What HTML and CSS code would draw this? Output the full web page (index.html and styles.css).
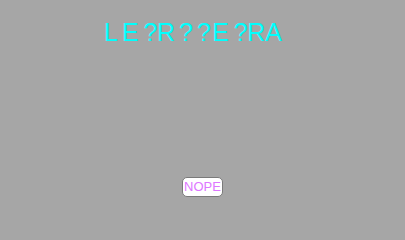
FILE: index.html
```html
<!DOCTYPE html>
<html>
<head>
<meta charset="utf-8">
<link rel="stylesheet" href="styles.css">
</head>
<body>
<div class="screen">
  <h1 class="title"><span class="g4">L</span><span class="g5">E</span><span class="gn">?</span><span class="g4">R?</span><span class="g1">?</span><span class="g5">E</span><span class="gn">?</span>RA</h1>
  <div class="spacer"></div>
  <button class="nope">NOPE</button>
</div>
</body>
</html>
```
FILE: styles.css
```css
html, body {
  margin: 0;
  padding: 0;
  background: #a6a6a6;
  width: 405px;
  height: 228px;
  overflow: hidden;
}
.screen {
  display: flex;
  flex-direction: column;
  align-items: center;
  height: 228px;
  font-family: "Liberation Sans", Arial, sans-serif;
}
.title {
  align-self: flex-start;
  margin: 18px 0 0 104px;
  font-family: "Liberation Sans", Arial, sans-serif;
  font-size: 25px;
  font-weight: normal;
  line-height: 29px;
  color: #00ffff;
  white-space: nowrap;
}
.g4 { letter-spacing: 4px; }
.g5 { letter-spacing: 4.9px; }
.gn { letter-spacing: -0.45px; }
.g1 { letter-spacing: 1.4px; }
.spacer {
  flex: 1;
}
.nope {
  margin: 0 0 31px 0;
  width: 41px;
  height: 20px;
  padding: 0;
  background: #ffffff;
  border: 1px solid #7a7a7a;
  border-radius: 5px;
  color: #dd77ff;
  font-family: "Liberation Sans", Arial, sans-serif;
  font-size: 13px;
  line-height: 18px;
}
```
